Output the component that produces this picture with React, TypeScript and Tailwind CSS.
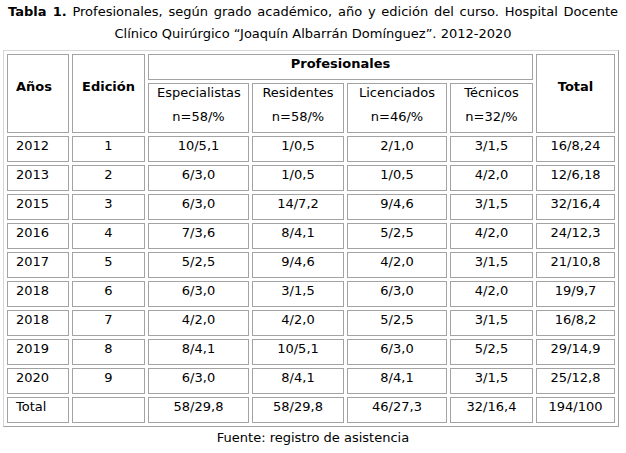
const rows: string[][] = [
  ["2012", "1", "10/5,1", "1/0,5", "2/1,0", "3/1,5", "16/8,24"],
  ["2013", "2", "6/3,0", "1/0,5", "1/0,5", "4/2,0", "12/6,18"],
  ["2015", "3", "6/3,0", "14/7,2", "9/4,6", "3/1,5", "32/16,4"],
  ["2016", "4", "7/3,6", "8/4,1", "5/2,5", "4/2,0", "24/12,3"],
  ["2017", "5", "5/2,5", "9/4,6", "4/2,0", "3/1,5", "21/10,8"],
  ["2018", "6", "6/3,0", "3/1,5", "6/3,0", "4/2,0", "19/9,7"],
  ["2018", "7", "4/2,0", "4/2,0", "5/2,5", "3/1,5", "16/8,2"],
  ["2019", "8", "8/4,1", "10/5,1", "6/3,0", "5/2,5", "29/14,9"],
  ["2020", "9", "6/3,0", "8/4,1", "8/4,1", "3/1,5", "25/12,8"],
  ["Total", "", "58/29,8", "58/29,8", "46/27,3", "32/16,4", "194/100"],
];

const subHeads = [
  ["Especialistas", "n=58/%"],
  ["Residentes", "n=58/%"],
  ["Licenciados", "n=46/%"],
  ["Técnicos", "n=32/%"],
];

const cell = "border border-[#a3a3a3] pt-px pb-[7px] px-2 leading-4 align-top";

export default function App() {
  return (
    <div className="w-[626px] h-[453px] bg-white text-black text-[13px] font-['DejaVu_Sans','Verdana',sans-serif] overflow-hidden">
      <div className="px-2 pt-px leading-[22px]">
        <div className="text-justify [text-align-last:justify]">
          <b>Tabla 1.</b> Profesionales, según grado académico, año y edición del curso. Hospital Docente
        </div>
        <div className="text-center">Clínico Quirúrgico “Joaquín Albarrán Domínguez”. 2012-2020</div>
      </div>

      <table className="mt-[5px] ml-[3px] w-[616px] table-fixed border-separate border-spacing-[3px] border border-t-[#d6d6d6] border-l-[#d6d6d6] border-b-[#a0a0a0] border-r-[#a0a0a0]">
        <colgroup>
          <col className="w-[62px]" />
          <col className="w-[73px]" />
          <col className="w-[101px]" />
          <col className="w-[92px]" />
          <col className="w-[100px]" />
          <col className="w-[83px]" />
          <col className="w-[79px]" />
        </colgroup>
        <thead>
          <tr>
            <th rowSpan={2} className={`${cell} text-left !align-middle !pb-[15px]`}>Años</th>
            <th rowSpan={2} className={`${cell} text-center !align-middle !pb-[15px]`}>Edición</th>
            <th colSpan={4} className={`${cell} text-center`}>Profesionales</th>
            <th rowSpan={2} className={`${cell} text-center !align-middle !pb-[15px]`}>Total</th>
          </tr>
          <tr>
            {subHeads.map(([a, b]) => (
              <th key={a} className={`${cell} text-center font-normal`}>
                <div className="mb-2">{a}</div>
                <div>{b}</div>
              </th>
            ))}
          </tr>
        </thead>
        <tbody>
          {rows.map((r, i) => (
            <tr key={i}>
              {r.map((v, j) => (
                <td key={j} className={`${cell} ${j === 0 ? "text-left" : "text-center"}`}>
                  {v}
                </td>
              ))}
            </tr>
          ))}
        </tbody>
      </table>

      <p className="mt-[3px] text-center leading-4">Fuente: registro de asistencia</p>
    </div>
  );
}
